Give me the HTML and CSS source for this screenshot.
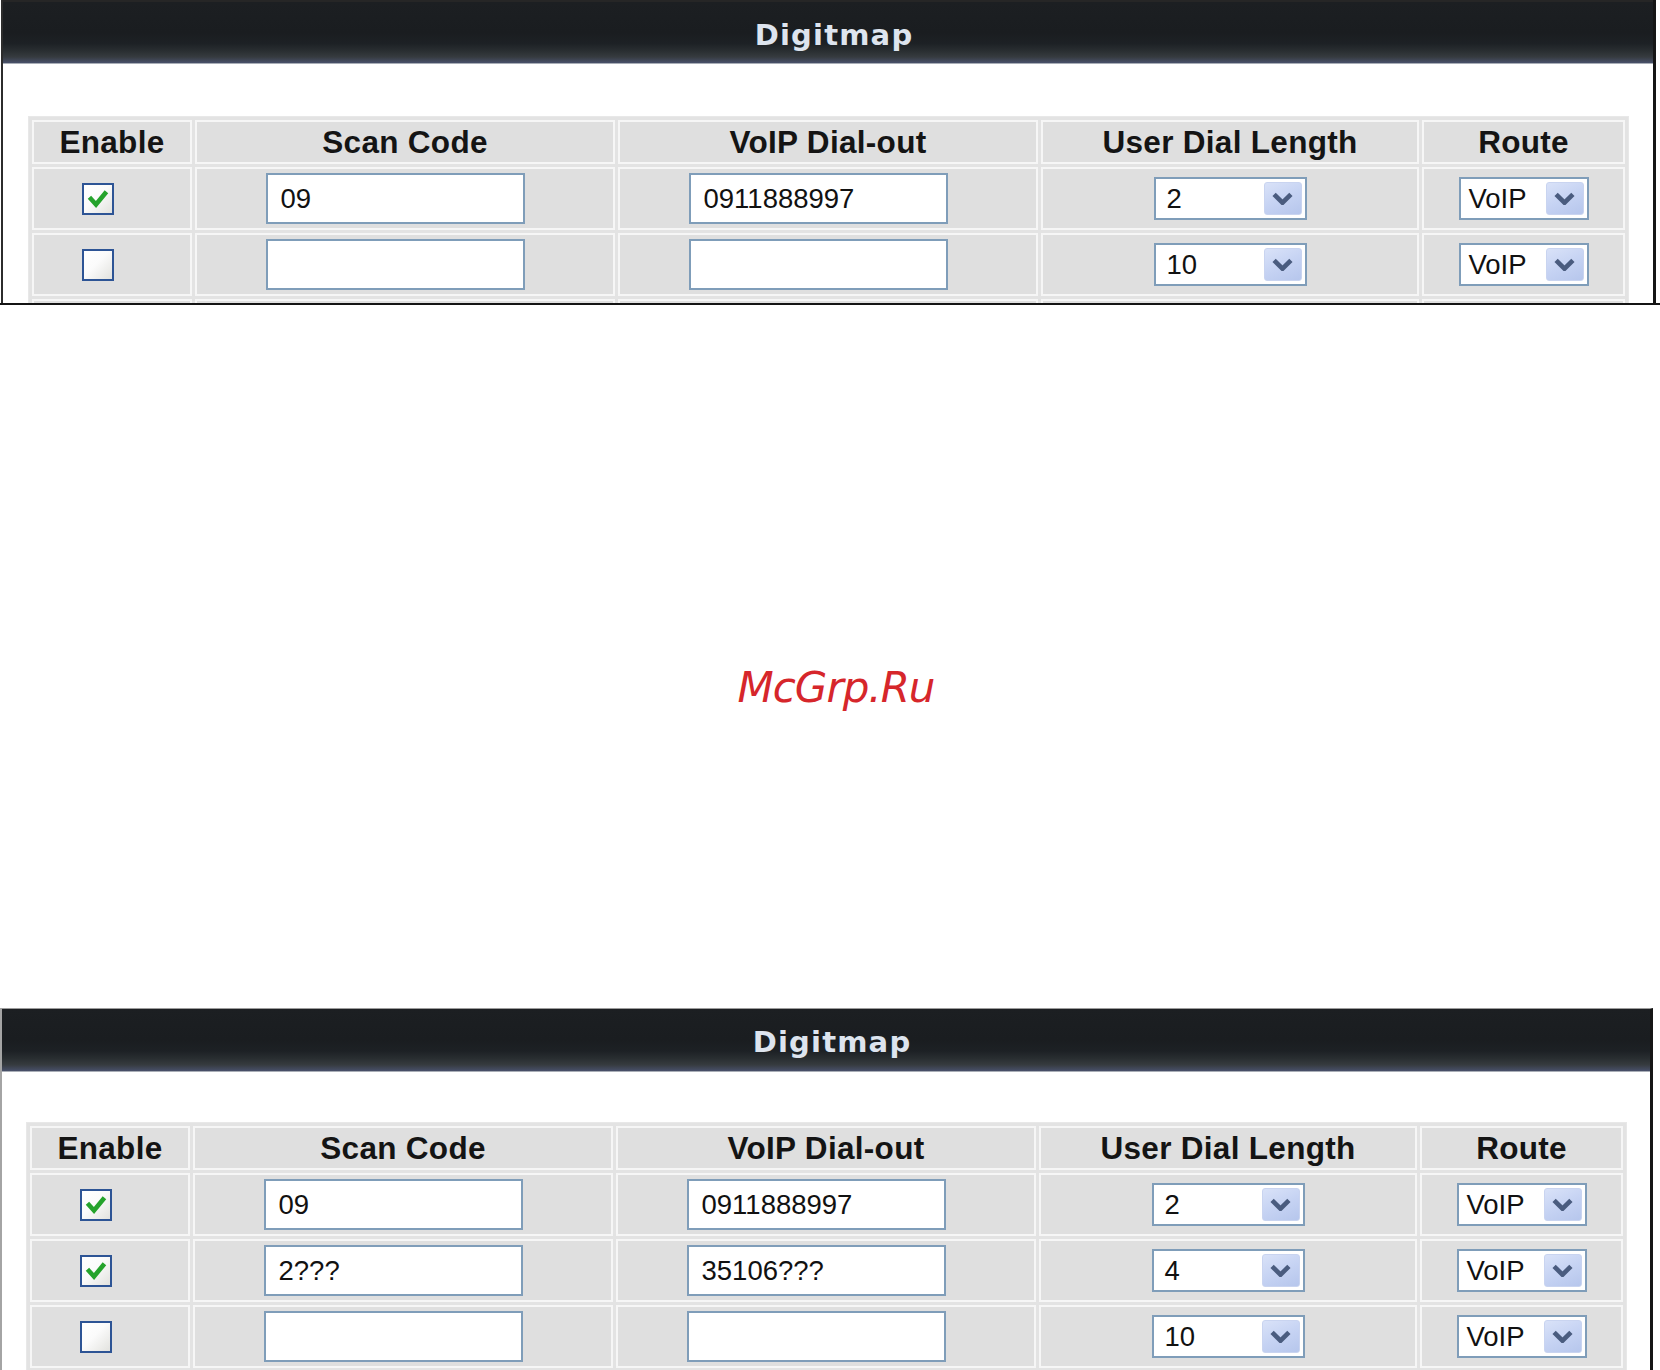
FILE: index.html
```html
<!DOCTYPE html>
<html lang="en">
<head>
<meta charset="utf-8">
<title>Digitmap</title>
<link rel="stylesheet" href="styles.css">
</head>
<body>
<section class="shot shot--top">
  <div class="panel">
    <div class="panel-head">Digitmap</div>
    <div class="panel-body">
      <table class="dm">
        <colgroup>
          <col class="c-en"><col class="c-scan"><col class="c-voip"><col class="c-len"><col class="c-route">
        </colgroup>
        <tr><th>Enable</th><th>Scan Code</th><th>VoIP Dial-out</th><th>User Dial Length</th><th>Route</th></tr>
        <tr>
          <td><div class="cell"><span class="chk"><svg viewBox="0 0 28 28"><polyline points="7,14 12,19.5 21,8.5"/></svg></span></div></td>
          <td><div class="cell"><input class="field" type="text" value="09" readonly></div></td>
          <td><div class="cell"><input class="field" type="text" value="0911888997" readonly></div></td>
          <td><div class="cell"><span class="sel sel--len"><span class="sel-val">2</span><span class="sel-btn"><svg viewBox="0 0 20 12"><polyline points="2,2 10,10 18,2"/></svg></span></span></div></td>
          <td><div class="cell"><span class="sel sel--route"><span class="sel-val">VoIP</span><span class="sel-btn"><svg viewBox="0 0 20 12"><polyline points="2,2 10,10 18,2"/></svg></span></span></div></td>
        </tr>
        <tr>
          <td><div class="cell"><span class="chk chk--off"></span></div></td>
          <td><div class="cell"><input class="field" type="text" value="" readonly></div></td>
          <td><div class="cell"><input class="field" type="text" value="" readonly></div></td>
          <td><div class="cell"><span class="sel sel--len"><span class="sel-val">10</span><span class="sel-btn"><svg viewBox="0 0 20 12"><polyline points="2,2 10,10 18,2"/></svg></span></span></div></td>
          <td><div class="cell"><span class="sel sel--route"><span class="sel-val">VoIP</span><span class="sel-btn"><svg viewBox="0 0 20 12"><polyline points="2,2 10,10 18,2"/></svg></span></span></div></td>
        </tr>
        <tr>
          <td></td><td></td><td></td><td></td><td></td>
        </tr>
      </table>
    </div>
  </div>
</section>

<div class="gap"><span class="mark">McGrp.Ru</span></div>

<section class="shot shot--bottom">
  <div class="panel panel--lower">
    <div class="panel-head">Digitmap</div>
    <div class="panel-body">
      <table class="dm">
        <colgroup>
          <col class="c-en"><col class="c-scan"><col class="c-voip"><col class="c-len"><col class="c-route">
        </colgroup>
        <tr><th>Enable</th><th>Scan Code</th><th>VoIP Dial-out</th><th>User Dial Length</th><th>Route</th></tr>
        <tr>
          <td><div class="cell"><span class="chk"><svg viewBox="0 0 28 28"><polyline points="7,14 12,19.5 21,8.5"/></svg></span></div></td>
          <td><div class="cell"><input class="field" type="text" value="09" readonly></div></td>
          <td><div class="cell"><input class="field" type="text" value="0911888997" readonly></div></td>
          <td><div class="cell"><span class="sel sel--len"><span class="sel-val">2</span><span class="sel-btn"><svg viewBox="0 0 20 12"><polyline points="2,2 10,10 18,2"/></svg></span></span></div></td>
          <td><div class="cell"><span class="sel sel--route"><span class="sel-val">VoIP</span><span class="sel-btn"><svg viewBox="0 0 20 12"><polyline points="2,2 10,10 18,2"/></svg></span></span></div></td>
        </tr>
        <tr>
          <td><div class="cell"><span class="chk"><svg viewBox="0 0 28 28"><polyline points="7,14 12,19.5 21,8.5"/></svg></span></div></td>
          <td><div class="cell"><input class="field" type="text" value="2???" readonly></div></td>
          <td><div class="cell"><input class="field" type="text" value="35106???" readonly></div></td>
          <td><div class="cell"><span class="sel sel--len"><span class="sel-val">4</span><span class="sel-btn"><svg viewBox="0 0 20 12"><polyline points="2,2 10,10 18,2"/></svg></span></span></div></td>
          <td><div class="cell"><span class="sel sel--route"><span class="sel-val">VoIP</span><span class="sel-btn"><svg viewBox="0 0 20 12"><polyline points="2,2 10,10 18,2"/></svg></span></span></div></td>
        </tr>
        <tr>
          <td><div class="cell"><span class="chk chk--off"></span></div></td>
          <td><div class="cell"><input class="field" type="text" value="" readonly></div></td>
          <td><div class="cell"><input class="field" type="text" value="" readonly></div></td>
          <td><div class="cell"><span class="sel sel--len"><span class="sel-val">10</span><span class="sel-btn"><svg viewBox="0 0 20 12"><polyline points="2,2 10,10 18,2"/></svg></span></span></div></td>
          <td><div class="cell"><span class="sel sel--route"><span class="sel-val">VoIP</span><span class="sel-btn"><svg viewBox="0 0 20 12"><polyline points="2,2 10,10 18,2"/></svg></span></span></div></td>
        </tr>
      </table>
    </div>
  </div>
</section>
</body>
</html>
```
FILE: styles.css
```css
html, body {
  margin: 0;
  padding: 0;
  overflow: hidden;
  background: #ffffff;
}
body {
  width: 1660px;
  height: 1370px;
  font-family: "Liberation Sans", Arial, sans-serif;
  color: #111;
}

.shot {
  overflow: hidden;
  box-sizing: border-box;
}
.shot--top {
  height: 305px;
  border-bottom: 2px solid #141414;
}
.shot--bottom {
  height: 365px;
}

.panel {
  margin-left: 1px;
  width: 1655px;
  box-sizing: border-box;
  border-left: 2px solid #2c2c2c;
  border-right: 3px solid #151515;
  background: #fff;
}
.panel--lower {
  margin-left: 0;
  width: 1653px;
  border-left: 2px solid #a4a4a4;
  border-top: 1px solid #9c9c9c;
}

.panel-head {
  height: 64px;
  box-sizing: border-box;
  padding: 4px 0 0 12px;
  border-top: 2px solid #262626;
  border-bottom: 1px solid #a9aeb7;
  background: linear-gradient(to bottom, #1c1f22 0%, #1a1d20 50%, #1d2125 68%, #292e31 80%, #363b3f 90%, #48506a 100%);
  display: flex;
  align-items: center;
  justify-content: center;
  color: #dde4ee;
  font-family: "DejaVu Sans", Verdana, sans-serif;
  font-weight: bold;
  font-size: 29px;
  letter-spacing: 1.2px;
}
.panel--lower .panel-head {
  height: 63px;
  border-top: 0;
}

.panel-body {
  padding: 52px 0 0 25px;
}
.panel--lower .panel-body {
  padding: 50px 0 0 24px;
}

.dm {
  width: 1601px;
  table-layout: fixed;
  border-collapse: separate;
  border-spacing: 3px;
  border: 1px solid #e8e8e8;
  background: #e3e3e3;
}
.c-en { width: 160px; }
.c-scan { width: 420px; }
.c-voip { width: 420px; }
.c-len { width: 378px; }
.c-route { width: 203px; }

.dm th,
.dm td {
  box-sizing: border-box;
  padding: 0;
  border: 2px solid #f6f6f6;
  background: #dfdfdf;
  text-align: center;
  vertical-align: middle;
}
.dm th {
  height: 44px;
  font-family: "Liberation Sans", Arial, sans-serif;
  font-weight: bold;
  font-size: 31.5px;
  color: #141414;
  letter-spacing: 0.3px;
}
.dm td {
  height: 63px;
}

.cell {
  display: flex;
  justify-content: center;
  align-items: center;
}

.chk {
  width: 32px;
  height: 32px;
  box-sizing: border-box;
  margin-right: 28px;
  border: 2px solid #2d5495;
  background: linear-gradient(135deg, #ffffff 0%, #fbfbfb 45%, #e2e2de 100%);
  display: flex;
  align-items: center;
  justify-content: center;
}
.chk svg {
  width: 28px;
  height: 28px;
  fill: none;
  stroke: #25a32c;
  stroke-width: 4.6;
  stroke-linecap: square;
  stroke-linejoin: miter;
}

.field {
  width: 259px;
  height: 51px;
  box-sizing: border-box;
  margin: 0 20px 0 0;
  padding: 0 0 0 13px;
  border: 2px solid #7f9db9;
  background: #fff;
  font-family: "Liberation Sans", Arial, sans-serif;
  font-size: 27.5px;
  color: #111;
  outline: none;
}

.sel {
  height: 43px;
  box-sizing: border-box;
  border: 2px solid #7f9db9;
  background: #fff;
  padding: 0 3px 0 11px;
  display: flex;
  align-items: center;
  justify-content: space-between;
  font-size: 27.5px;
  color: #111;
}
.sel--len { width: 153px; }
.sel--route { width: 130px; padding-left: 8px; }
.sel-val {
  line-height: 1;
}
.sel-btn {
  width: 38px;
  height: 33px;
  box-sizing: border-box;
  border-radius: 3px;
  border: 1px solid #c9d4f0;
  background: linear-gradient(155deg, #d9e2f8 0%, #c6d3f3 50%, #b6c6ec 100%);
  display: flex;
  align-items: center;
  justify-content: center;
}
.sel-btn svg {
  width: 21px;
  height: 13px;
  fill: none;
  stroke: #4a5c7f;
  stroke-width: 4.4;
  stroke-linecap: butt;
  stroke-linejoin: miter;
}

.gap {
  height: 703px;
  box-sizing: border-box;
  padding: 362px 0 0 12px;
  text-align: center;
  line-height: 1;
}
.mark {
  font-family: "DejaVu Sans", Verdana, sans-serif;
  font-style: oblique;
  font-size: 42px;
  letter-spacing: -1px;
  color: #d6262b;
}
```
